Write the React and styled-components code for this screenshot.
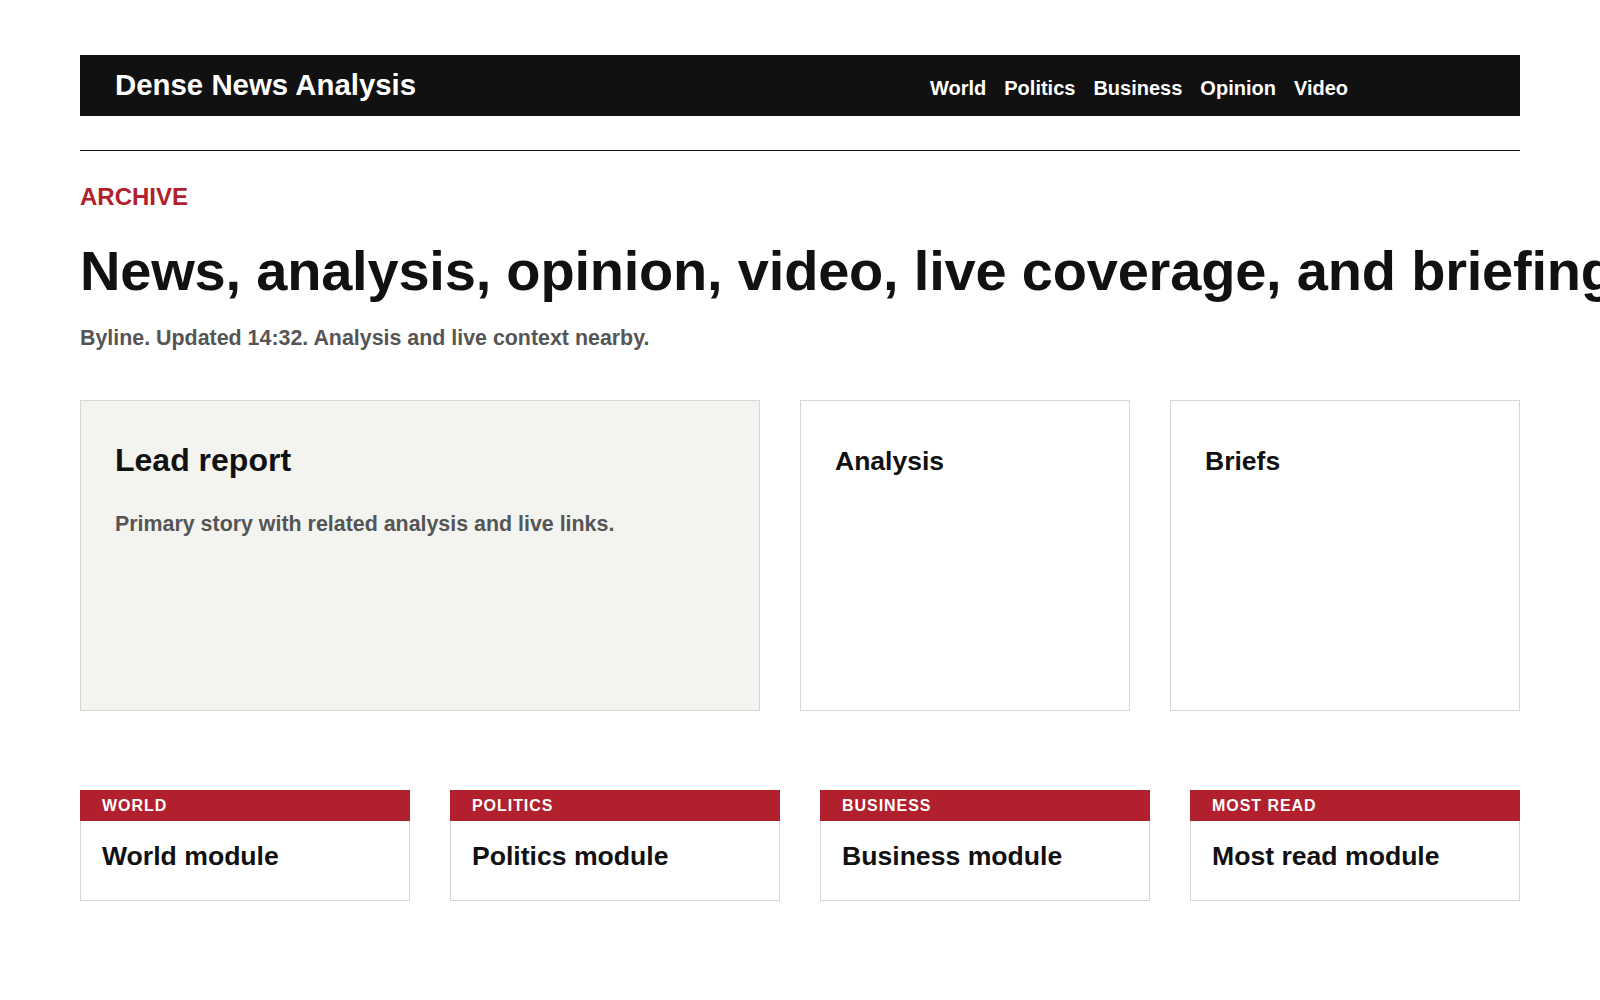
import React from 'react'
import styled, { createGlobalStyle } from 'styled-components'

const GlobalStyle = createGlobalStyle`
  html, body {
    margin: 0;
    padding: 0;
    background: #ffffff;
    overflow-x: hidden;
  }
  body {
    font-family: "Liberation Sans", Arial, sans-serif;
    color: #111111;
  }
  * {
    box-sizing: border-box;
  }
`

const nav = ['World', 'Politics', 'Business', 'Opinion', 'Video']

const modules = [
  { label: 'WORLD', title: 'World module' },
  { label: 'POLITICS', title: 'Politics module' },
  { label: 'BUSINESS', title: 'Business module' },
  { label: 'MOST READ', title: 'Most read module' },
]

function App() {
  return (
    <>
      <GlobalStyle />
      <Page>
        <Masthead>
          <Logo>Dense News Analysis</Logo>
          <Nav>
            {nav.map((item) => (
              <NavLink key={item}>{item}</NavLink>
            ))}
          </Nav>
        </Masthead>

        <Rule />

        <Kicker>ARCHIVE</Kicker>
        <Headline>News, analysis, opinion, video, live coverage, and briefings</Headline>
        <Byline>Byline. Updated 14:32. Analysis and live context nearby.</Byline>

        <CardGrid>
          <Card $lead>
            <CardTitle $lead>Lead report</CardTitle>
            <CardText>Primary story with related analysis and live links.</CardText>
          </Card>
          <Card>
            <CardTitle>Analysis</CardTitle>
          </Card>
          <Card>
            <CardTitle>Briefs</CardTitle>
          </Card>
        </CardGrid>

        <ModuleGrid>
          {modules.map((m) => (
            <Module key={m.label}>
              <ModuleBar>{m.label}</ModuleBar>
              <ModuleBody>
                <ModuleTitle>{m.title}</ModuleTitle>
              </ModuleBody>
            </Module>
          ))}
        </ModuleGrid>
      </Page>
    </>
  )
}

export default App

const Page = styled.main`
  padding: 55px 80px 80px;
`

const Masthead = styled.header`
  display: flex;
  align-items: baseline;
  background: #111111;
  padding: 13px 35px 14px;
`

const Logo = styled.div`
  color: #ffffff;
  font-size: 29.4px;
  font-weight: 700;
`

const Nav = styled.nav`
  display: flex;
  gap: 18px;
  margin-left: auto;
  margin-right: 137px;
`

const NavLink = styled.a`
  color: #ffffff;
  font-size: 20px;
  font-weight: 700;
  text-decoration: none;
`

const Rule = styled.hr`
  border: 0;
  border-top: 1px solid #111111;
  margin: 34px 0 0;
`

const Kicker = styled.div`
  color: #b21f2d;
  font-size: 24px;
  font-weight: 700;
  margin-top: 32px;
`

const Headline = styled.h1`
  margin: 27px 0 0;
  font-size: 56px;
  font-weight: 700;
  letter-spacing: -0.2px;
  white-space: nowrap;
  color: #111111;
`

const Byline = styled.p`
  margin: 23px 0 0;
  font-size: 21.4px;
  font-weight: 700;
  color: #555555;
`

const CardGrid = styled.section`
  display: grid;
  grid-template-columns: minmax(0, 68fr) minmax(0, 33fr) minmax(0, 35fr);
  gap: 40px;
  margin-top: 49px;
`

const Card = styled.article`
  min-height: 311px;
  padding: 41px 34px 40px;
  border: 1px solid #d6d6d6;
  background: ${(p) => (p.$lead ? '#f3f3ef' : '#ffffff')};
`

const CardTitle = styled.h2`
  margin: ${(p) => (p.$lead ? '0' : '4px 0 0')};
  font-size: ${(p) => (p.$lead ? '32px' : '26.5px')};
  font-weight: 700;
  color: #111111;
`

const CardText = styled.p`
  margin: 33px 0 0;
  font-size: 21.4px;
  font-weight: 700;
  color: #555555;
`

const ModuleGrid = styled.section`
  display: grid;
  grid-template-columns: repeat(4, minmax(0, 1fr));
  gap: 40px;
  margin-top: 79px;
`

const Module = styled.article`
  display: flex;
  flex-direction: column;
`

const ModuleBar = styled.div`
  height: 31px;
  display: flex;
  align-items: center;
  padding: 1px 22px 0;
  background: #b21f2d;
  color: #ffffff;
  font-size: 16px;
  font-weight: 700;
  letter-spacing: 0.95px;
`

const ModuleBody = styled.div`
  border: 1px solid #d6d6d6;
  border-top: 0;
  padding: 20px 21px 28px;
`

const ModuleTitle = styled.h3`
  margin: 0;
  font-size: 26.6px;
  font-weight: 700;
  color: #111111;
`
